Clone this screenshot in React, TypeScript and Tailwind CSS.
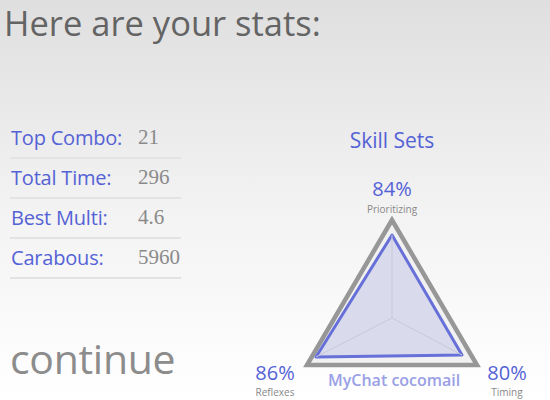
const stats = [
  { label: 'Top Combo:', value: '21' },
  { label: 'Total Time:', value: '296' },
  { label: 'Best Multi:', value: '4.6' },
  { label: 'Carabous:', value: '5960' },
];

function SkillChart() {
  return (
    <svg width="240" height="160" viewBox="0 0 240 160" className="block">
      <polygon points="120,4 35,149 205,149" fill="#f1f1f1" stroke="#979797" strokeWidth="4.5" strokeLinejoin="miter" />
      <polygon points="120,19 44,141 190,139" fill="#d9daec" stroke="#6670d8" strokeWidth="3" strokeLinejoin="round" />
      <line x1="120" y1="102" x2="120" y2="19" stroke="#c8c8d8" strokeWidth="1" />
      <line x1="120" y1="102" x2="44" y2="141" stroke="#c8c8d8" strokeWidth="1" />
      <line x1="120" y1="102" x2="190" y2="139" stroke="#c8c8d8" strokeWidth="1" />
    </svg>
  );
}

export default function App() {
  return (
    <div
      className="w-[550px] h-[400px] overflow-hidden bg-gradient-to-b from-[#dfdfdf] via-[#f2f2f2] to-white flex flex-col"
      style={{ fontFamily: '"Open Sans", "Noto Sans", sans-serif' }}
    >
      <h1 className="pl-[4px] pt-[2px] text-[34.5px] leading-[42px] text-[#646464]">Here are your stats:</h1>

      <div className="flex flex-1">
        {/* Stats list */}
        <div className="w-[250px] flex flex-col pl-[10px] pt-[75px]">
          <div className="w-[171px]">
            {stats.map(s => (
              <div key={s.label} className="h-[40px] flex items-center border-b-2 border-[#e3e3e3]">
                <span className="w-[128px] pl-[1px] text-[20px] text-[#5462d6] tracking-[-0.2px]">{s.label}</span>
                <span className="text-[21px] text-[#8a8a8a]" style={{ fontFamily: '"Liberation Serif", serif' }}>{s.value}</span>
              </div>
            ))}
          </div>
          <div className="mt-[57px] text-[41px] leading-[44px] text-[#8c8c8c] tracking-[-0.3px]">continue</div>
        </div>

        {/* Skill sets */}
        <div className="flex-1 flex flex-col items-center pr-[16px] pt-[82px] relative">
          <div className="text-[21px] text-[#5462d6] leading-[28px]">Skill Sets</div>
          <div className="mt-[24px] text-[20px] leading-[22px] text-[#5462d6]">84%</div>
          <div className="mt-[3px] text-[10px] leading-[12px] text-[#888]">Prioritizing</div>
          <div className="mt-[1px]">
            <SkillChart />
          </div>
          <div className="absolute left-0 top-[319px] w-[50px] flex flex-col items-center">
            <span className="text-[20px] leading-[20px] text-[#5462d6]">86%</span>
            <span className="mt-[3px] text-[10px] leading-[12px] text-[#888]">Reflexes</span>
          </div>
          <div className="absolute left-[232px] top-[319px] w-[50px] flex flex-col items-center">
            <span className="text-[20px] leading-[20px] text-[#5462d6]">80%</span>
            <span className="mt-[3px] text-[10px] leading-[12px] text-[#888]">Timing</span>
          </div>
          <div className="absolute left-[78px] top-[325px] text-[16px] leading-[22px] font-semibold text-[#9aa0e6]">MyChat cocomail</div>
        </div>
      </div>
    </div>
  );
}
